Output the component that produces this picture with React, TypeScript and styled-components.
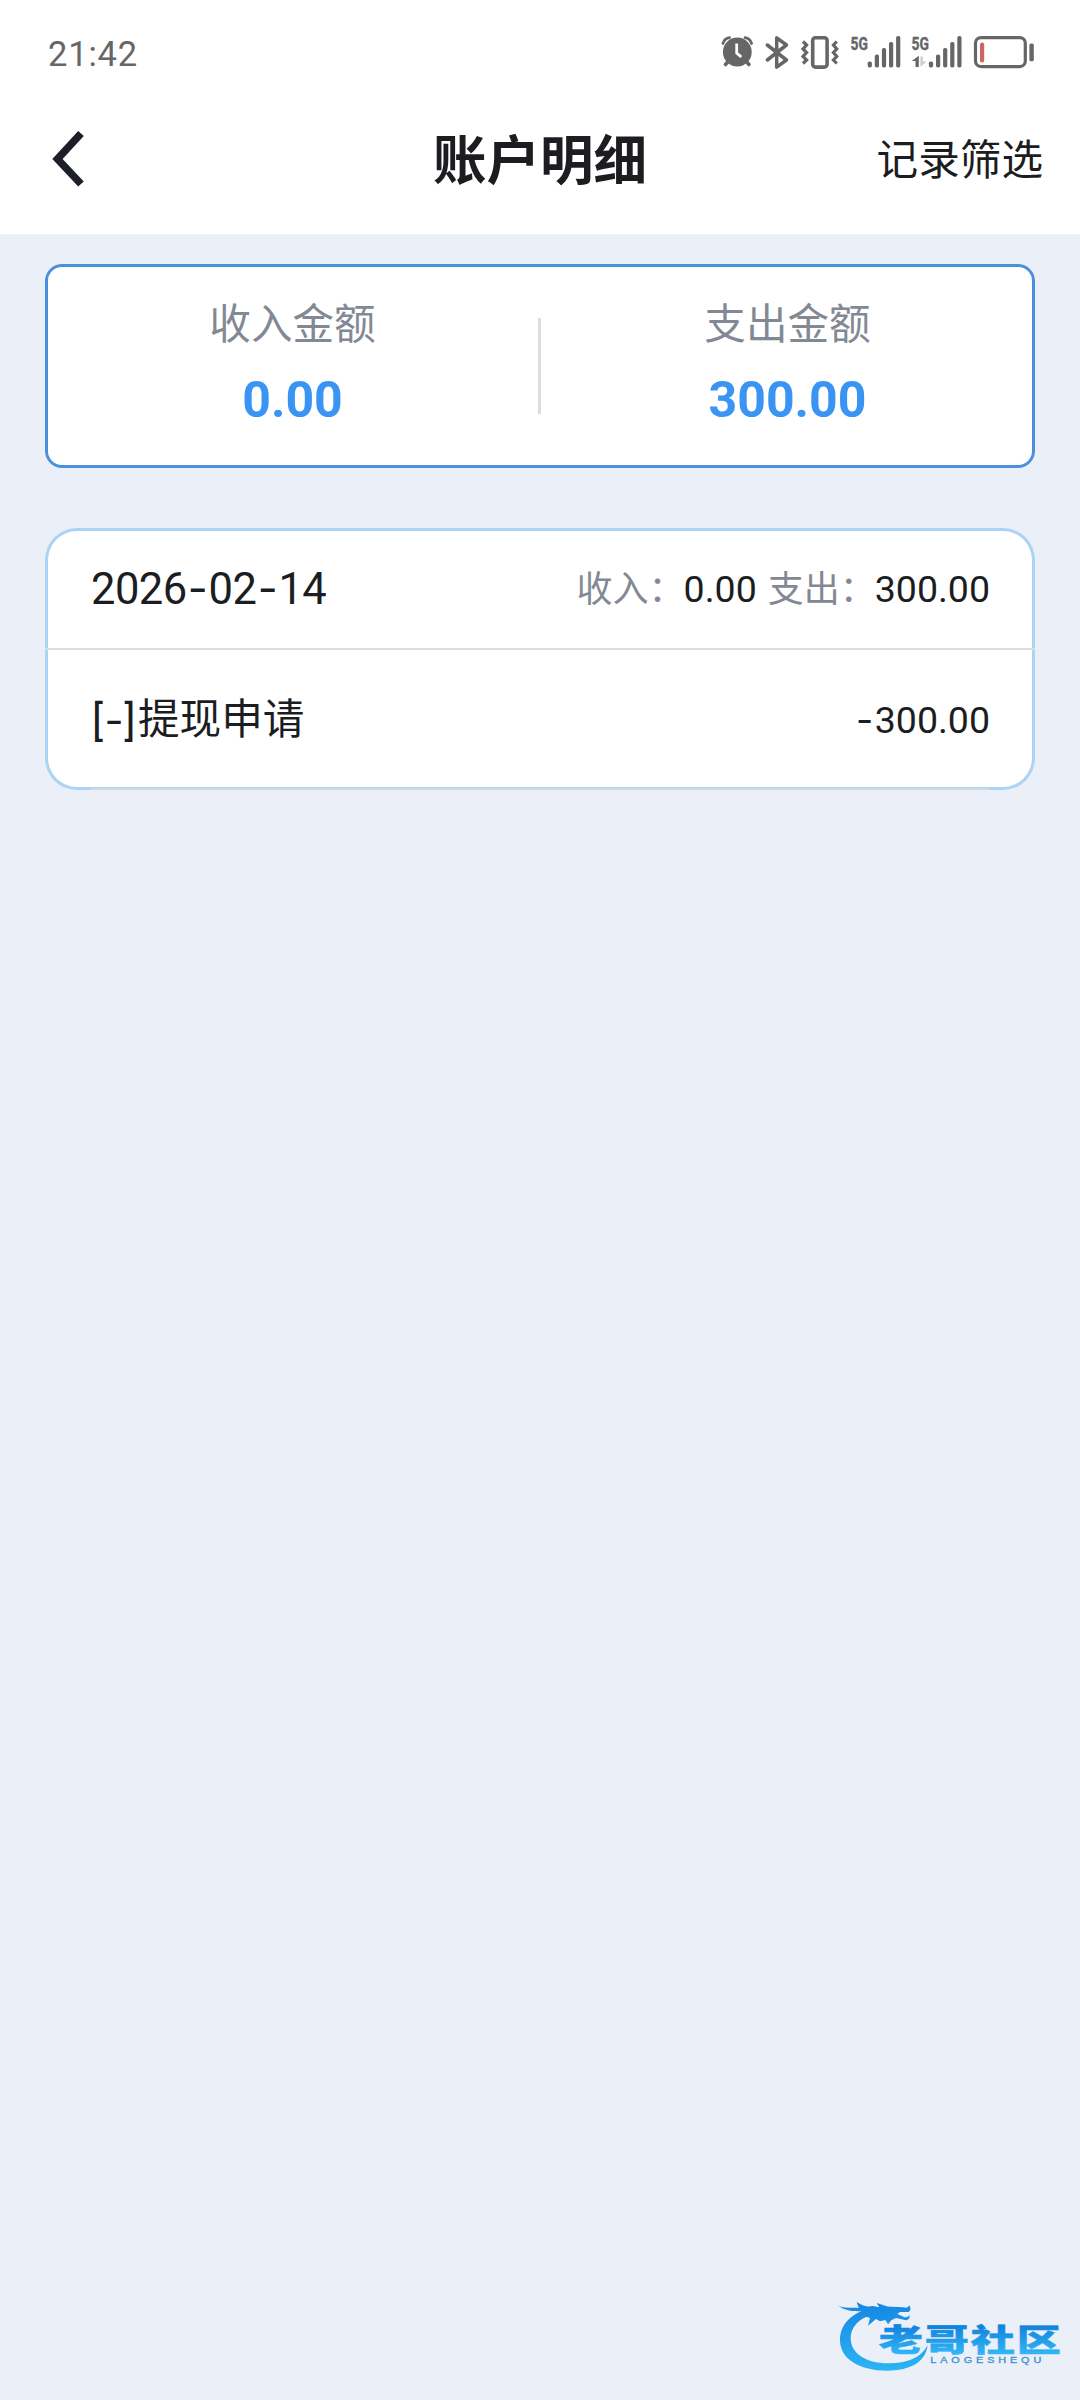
import React from 'react';
import styled, { createGlobalStyle } from 'styled-components';

const FONT = 'Roboto, "Noto Sans CJK SC", sans-serif';
const GREY = '#666666';

const GlobalStyle = createGlobalStyle`
  * { box-sizing: border-box; }
  body { margin: 0; background: #eaeff8; font-family: ${FONT}; }
`;

const Page = styled.div`
  position: relative;
  width: 1080px;
  height: 2400px;
  overflow: hidden;
  background: #eaeff8;
  color: #1b1d21;
`;

const Header = styled.header`
  height: 234px;
  background: #fff;
`;

const StatusBar = styled.div`
  display: flex;
  justify-content: space-between;
  align-items: center;
  height: 104px;
  padding: 0 40px 0 48px;
`;

const Clock = styled.span`
  padding-top: 3px;
  color: ${GREY};
  font-size: 34.5px;
  line-height: 40px;
  letter-spacing: 0.8px;
`;

const StatusIcons = styled.div`
  display: flex;
`;

const Icon = styled.svg`
  display: block;
`;

const NavBar = styled.nav`
  display: grid;
  grid-template-columns: 1fr auto 1fr;
  align-items: center;
  height: 110px;
  padding: 0 37px 0 48px;
`;

const BackButton = styled.button`
  display: flex;
  width: 44px;
  height: 64px;
  padding: 0;
  border: 0;
  background: none;
`;

const Title = styled.h1`
  margin: 0 11px 0 0;
  padding-top: 6px;
  font-size: 53.5px;
  font-weight: 700;
  line-height: 64px;
`;

const FilterLink = styled.span`
  justify-self: end;
  padding-top: 4px;
  font-size: 41.6px;
  line-height: 60px;
`;

const Content = styled.main`
  display: flex;
  flex-direction: column;
  gap: 60px;
  padding: 30px 45px;
`;

const Summary = styled.section`
  display: flex;
  align-items: center;
  height: 204px;
  border-radius: 17px;
  background: #fff;
  box-shadow: inset 0 0 0 3px #4a90de;
`;

const SummaryItem = styled.div`
  flex: 1;
  display: flex;
  flex-direction: column;
  align-items: center;
  gap: 15px;
  padding-bottom: 7px;
`;

const SummaryLabel = styled.span`
  color: #838994;
  font-size: 41.6px;
  line-height: 60px;
`;

const SummaryValue = styled.strong`
  color: #3994f3;
  font-size: 50px;
  font-weight: 700;
  line-height: 60px;
`;

const Divider = styled.div`
  width: 3px;
  height: 96px;
  margin: 0 -1px 0 -2px;
  background: #dadde2;
`;

const Record = styled.section`
  height: 262px;
  border-radius: 32px;
  background: #fff;
  box-shadow: inset 0 0 0 3px #abd3f4;
`;

const Row = styled.div<{ $height: number }>`
  display: flex;
  justify-content: space-between;
  align-items: center;
  height: ${(p) => p.$height}px;
  padding: 1px 45px 0 46px;
`;

const RowLine = styled.div<{ $inset: number; $color: string }>`
  height: 2px;
  margin: 0 ${(p) => p.$inset}px;
  background: ${(p) => p.$color};
`;

const DateText = styled.span`
  font-size: 43.5px;
  line-height: 60px;
  letter-spacing: -0.55px;
  white-space: nowrap;
`;

const Dash = styled.span<{ $width: number }>`
  display: inline-block;
  width: ${(p) => p.$width}px;
  font-family: Inter, sans-serif;
  text-align: center;
`;

const EntryName = styled.span`
  display: flex;
  padding-top: 2px;
  font-size: 41.6px;
  line-height: 60px;
`;

const Bracketed = styled.span`
  width: 47px;
  padding-left: 1px;
  letter-spacing: 1.4px;
  white-space: nowrap;
`;

const Totals = styled.div`
  display: flex;
  align-items: center;
  line-height: 60px;
`;

const TotalLabel = styled.span`
  width: 107px;
  padding-top: 2px;
  color: #838994;
  font-size: 36px;
  white-space: nowrap;
`;

const Amount = styled.span<{ $gap?: number }>`
  margin-right: ${(p) => p.$gap ?? 0}px;
  padding-top: 1px;
  font-size: 37.5px;
  line-height: 60px;
`;

const Watermark = styled.svg`
  position: absolute;
  right: 0;
  bottom: 0;
`;

const AlarmIcon = () => (
  <Icon width="36" height="44" viewBox="720 30 36 44" fill="none" stroke={GREY}>
    <circle cx="737.3" cy="52" r="14.4" fill={GREY} stroke="none" />
    <path d="M722.9 43.5Q724.5 38.2 729.5 37.6M745 37.6Q750 38.2 751.6 43.5" strokeWidth="2.8" strokeLinecap="round" />
    <path d="M728.5 61L725.5 64.5M746 61L749 64.5" strokeWidth="3.6" strokeLinecap="round" />
    <path d="M736.7 43.5V53L741.3 57" stroke="#fff" strokeWidth="2.8" />
  </Icon>
);

const BluetoothIcon = () => (
  <Icon width="39" height="44" viewBox="756 30 39 44" fill="none" stroke={GREY} strokeWidth="3.5" strokeLinejoin="round" strokeLinecap="round">
    <path d="M767.3 45L786.5 60L776.7 67.2V37.8L786.5 45L767.3 60" />
  </Icon>
);

const VibrateIcon = () => (
  <Icon width="50" height="44" viewBox="795 30 50 44" fill="none" stroke={GREY} strokeWidth="3.2">
    <rect x="812.7" y="37.7" width="14.4" height="29.4" rx="2.8" strokeWidth="3.6" />
    <path d="M803 41.5L806.6 45L803 49L806.6 52.5L803 56.5L806.6 60L803 63.5" />
    <path d="M836.8 41.5L833.4 45L836.8 49L833.4 52.5L836.8 56.5L833.4 60L836.8 63.5" />
  </Icon>
);

const BARS = [6, 13, 19.5, 25.5, 31.5];

const SignalIcon = ({ x, width, labelX, barX, data }: { x: number; width: number; labelX: number; barX: number; data?: boolean }) => (
  <Icon width={width} height="44" viewBox={`${x} 30 ${width} 44`}>
    <text x={labelX} y="50" fontFamily="Roboto, sans-serif" fontWeight="700" fontSize="18.5" textLength="17.4" lengthAdjust="spacingAndGlyphs" fill={GREY} stroke={GREY} strokeWidth="0.4">5G</text>
    {data && (
      <>
        <path d="M915.5 67V61H911.8L918.8 55.8V67Z" fill={GREY} />
        <path d="M920.5 56.5H922.8V61.5H926.6L920.5 66.8Z" fill="#cccccc" />
      </>
    )}
    {BARS.map((h, i) => (
      <rect key={h} x={barX + i * 7.1} y={67.5 - h} width="4.2" height={h} rx="1.7" fill={GREY} />
    ))}
  </Icon>
);

const BatteryIcon = () => (
  <Icon width="74" height="44" viewBox="966 30 74 44">
    <rect x="975.5" y="37.6" width="49.8" height="29" rx="5.5" fill="none" stroke={GREY} strokeWidth="3.2" />
    <rect x="980" y="42.5" width="4.2" height="20" rx="2" fill="#cf6464" />
    <rect x="1029.4" y="43.5" width="4.4" height="17.8" rx="1.6" fill={GREY} />
  </Icon>
);

const LogoWatermark = () => (
  <Watermark width="260" height="120" viewBox="0 0 780 360" role="img">
    <defs>
      <linearGradient id="logoArc" x1="0" y1="70" x2="0" y2="272" gradientUnits="userSpaceOnUse">
        <stop offset="0" stopColor="#1687e2" />
        <stop offset="1" stopColor="#2bb4f4" />
      </linearGradient>
      <linearGradient id="logoText" x1="0" y1="-75" x2="0" y2="8" gradientUnits="userSpaceOnUse">
        <stop offset="0" stopColor="#1282dd" />
        <stop offset="1" stopColor="#31b6f5" />
      </linearGradient>
    </defs>
    <g fill="url(#logoArc)">
      <path d="M148 86C94 98 60 134 60 180C60 238 120 272 202 272C266 272 316 250 323 196C302 236 256 251 204 250C136 249 92 220 92 174C92 142 116 114 158 104Z" />
      <path d="M54 77C76 86 94 81 116 84L110 66C130 78 142 82 158 78L178 82L170 69C188 75 202 81 216 80L250 82Q265 86 268 76Q276 90 266 96L240 96L232 102L252 111Q263 114 268 106Q272 118 258 121L228 114L214 121L204 133L196 120L180 124L168 117L144 137L150 114L126 106L142 96C116 90 90 101 54 77Z" />
    </g>
    <g transform="translate(176 213) scale(1.44 1)">
      <text x="0" y="0" fontFamily='"Noto Sans CJK SC", sans-serif' fontSize="92" fontWeight="900" letterSpacing="4" fill="url(#logoText)" stroke="url(#logoText)" strokeWidth="1.5">老哥社区</text>
    </g>
    <g transform="translate(331 249) scale(1.3 1)">
      <text x="0" y="0" fontFamily='"Liberation Sans", sans-serif' fontSize="25" textLength="256" fill="#3d93cf" stroke="#3d93cf" strokeWidth="0.9">LAOGESHEQU</text>
    </g>
  </Watermark>
);

export default function App() {
  return (
    <Page>
      <GlobalStyle />
      <Header>
        <StatusBar>
          <Clock>21:42</Clock>
          <StatusIcons>
            <AlarmIcon />
            <BluetoothIcon />
            <VibrateIcon />
            <SignalIcon x={845} width={60} labelX={850.5} barX={867.7} />
            <SignalIcon x={905} width={61} labelX={911.5} barX={928.9} data />
            <BatteryIcon />
          </StatusIcons>
        </StatusBar>
        <NavBar>
          <BackButton aria-label="返回">
            <Icon width="44" height="64" viewBox="48 127 44 64">
              <path d="M81 133.5L57.5 159L81 184" fill="none" stroke="#1c2026" strokeWidth="7.6" />
            </Icon>
          </BackButton>
          <Title>账户明细</Title>
          <FilterLink>记录筛选</FilterLink>
        </NavBar>
      </Header>
      <Content>
        <Summary>
          <SummaryItem>
            <SummaryLabel>收入金额</SummaryLabel>
            <SummaryValue>0.00</SummaryValue>
          </SummaryItem>
          <Divider />
          <SummaryItem>
            <SummaryLabel>支出金额</SummaryLabel>
            <SummaryValue>300.00</SummaryValue>
          </SummaryItem>
        </Summary>
        <Record>
          <Row $height={120}>
            <DateText>
              2026<Dash $width={22}>-</Dash>02<Dash $width={22}>-</Dash>14
            </DateText>
            <Totals>
              <TotalLabel>收入：</TotalLabel>
              <Amount $gap={11}>0.00</Amount>
              <TotalLabel>支出：</TotalLabel>
              <Amount>300.00</Amount>
            </Totals>
          </Row>
          <RowLine $inset={0} $color="#dadce0" />
          <Row $height={138}>
            <EntryName>
              <Bracketed>
                [<Dash $width={20}>-</Dash>]
              </Bracketed>
              提现申请
            </EntryName>
            <Amount>
              <Dash $width={20}>-</Dash>300.00
            </Amount>
          </Row>
          <RowLine $inset={45} $color="#d0d7e2" />
        </Record>
      </Content>
      <LogoWatermark />
    </Page>
  );
}
